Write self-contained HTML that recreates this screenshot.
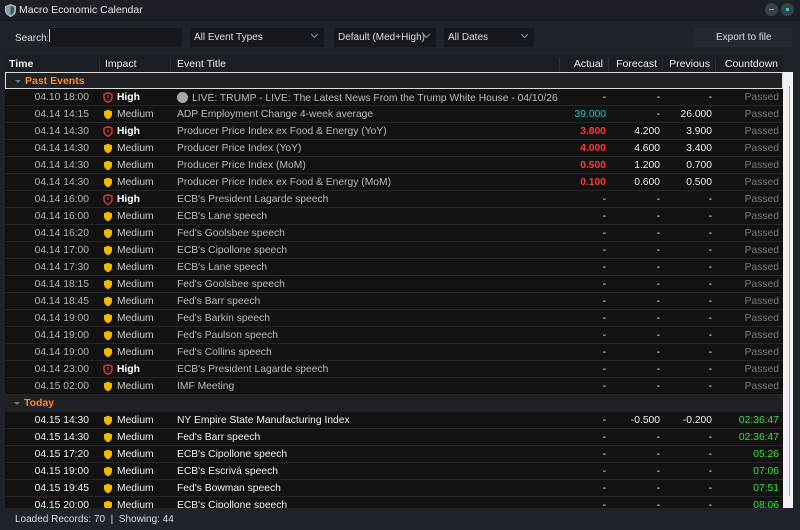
<!DOCTYPE html>
<html><head><meta charset="utf-8"><style>
*{margin:0;padding:0;box-sizing:border-box}
body{width:800px;height:530px;background:#1f242b;font-family:"Liberation Sans",sans-serif;font-size:10.3px;color:#ddd;position:relative;overflow:hidden}
.title{position:absolute;left:0;top:0;width:800px;height:21px;background:#1c2026;border-bottom:1px solid #15181c}
.title span{position:absolute;left:19px;top:4px;font-size:10.5px;color:#e6e6e6}
.wb{position:absolute;top:3px;width:13px;height:13px;border-radius:50%;background:#38424c}
.wb i{position:absolute;left:4px;top:6px;width:5px;height:1px;background:#3cc7c0}
.tb{position:absolute;top:28px;height:19px;background:#15191e;color:#ddd;font-size:10px;padding:4px 0 0 4px}
.chev{position:absolute;right:7px;top:4px;width:5px;height:5px;border-right:1.3px solid #3cc7c0;border-bottom:1.3px solid #3cc7c0;transform:rotate(45deg)}
.table{position:absolute;left:5px;top:55px;width:778px;height:453px;background:#131313;overflow:hidden}
.hdr{position:absolute;left:0;top:0;width:778px;height:17px;background:#1b1f24;font-size:10.5px;color:#eee}
.hdr div{position:absolute;top:3px;height:14px;border-right:1px solid #2c3036}
.row{position:absolute;left:0;width:778px;height:17px;border-bottom:1px solid #262626;background:#121212}
.row div{position:absolute;top:3px;white-space:nowrap}
.t{right:694px;color:#b4b4b4}
.row.td .t{color:#f0f0f0}
.ic{left:98px;top:3px!important}
.im{left:112px;color:#c8c8c8}
.row.td .im{color:#eee}
.im.h{font-weight:bold;color:#fff}
.ev{left:172px;color:#bbb}
.row.td .ev{color:#f2f2f2}
.a{right:177px;color:#eee}
.f{right:123px;color:#eee}
.p{right:71px;color:#eee}
.c{right:4px;color:#7a7a7a}
.g{color:#3ee43e!important}
.red{color:#ff3b30!important;font-weight:bold}
.grp{position:absolute;left:0;width:778px;height:17px;background:#1e2126;color:#ff8c1a;font-weight:bold;font-size:10.5px}
.grp span{position:absolute;left:19px;top:2px}
.grp b{position:absolute;left:9px;top:7px;border-left:3px solid transparent;border-right:3px solid transparent;border-top:3px solid #777}
.sb{position:absolute;left:783px;top:72px;width:10px;height:436px;background:#f2f2f2}
.sb i{position:absolute;left:6px;top:14px;width:1px;height:410px;background:#aaa}
.status{position:absolute;left:15px;top:514px;color:#ddd;font-size:10px}
</style></head><body>
<div class="title">
<svg style="position:absolute;left:5px;top:4px" width="11" height="13" viewBox="0 0 11 13"><path d="M5.5 0.5L10.5 2.5V6.5C10.5 9.5 8 11.5 5.5 12.5C3 11.5 0.5 9.5 0.5 6.5V2.5Z" fill="#8a9aa6" stroke="#cfd8de" stroke-width="0.8"/><path d="M5.5 2L9 3.4V6.5C9 8.5 7.3 10 5.5 10.9Z" fill="#2e5f5a"/></svg>
<span>Macro Economic Calendar</span>
<div class="wb" style="left:765px"><i></i></div><div class="wb" style="left:781px"><i style="left:5px;top:5px;width:3px;height:3px;background:#3cc7c0"></i></div>
</div>
<div style="position:absolute;left:15px;top:33px;font-size:10px;color:#ddd">Search:</div>
<div class="tb" style="left:48px;width:134px"><span style="display:block;width:1px;height:13px;background:#ddd;margin-top:-3px;margin-left:-3px"></span></div>
<div class="tb" style="left:190px;width:134px">All Event Types<i class="chev"></i></div>
<div class="tb" style="left:334px;width:102px">Default (Med+High)<i class="chev"></i></div>
<div class="tb" style="left:444px;width:90px">All Dates<i class="chev"></i></div>
<div class="tb" style="left:694px;width:98px;background:#252a31;padding-left:22px">Export to file</div>

<div class="table">
<div class="hdr">
<div style="left:4px;width:91px;font-weight:bold;border-right:1px solid #2c3036">Time</div>
<div style="left:95px;width:71px;padding-left:5px">Impact</div>
<div style="left:166px;width:389px;padding-left:6px">Event Title</div>
<div style="left:555px;width:49px;text-align:right;padding-right:5px">Actual</div>
<div style="left:604px;width:54px;text-align:right;padding-right:5px">Forecast</div>
<div style="left:658px;width:53px;text-align:right;padding-right:5px">Previous</div>
<div style="left:711px;width:67px;text-align:right;padding-right:5px;border:none">Countdown</div>
</div>
<div class="grp" style="top:17px;border:1px solid #dcdcdc"><b></b><span>Past Events</span></div>
<div id="rows"></div>
</div>
<div class="sb"><i></i></div>
<div class="status">Loaded Records: 70 &nbsp;| &nbsp;Showing: 44</div>
<script>
var H='<svg width="10" height="11" viewBox="0 0 10 11"><path d="M5 0.8L9 2.2V5.2C9 7.8 7 9.4 5 10.3C3 9.4 1 7.8 1 5.2V2.2Z" fill="none" stroke="#e53935" stroke-width="1.4"/><path d="M5 3V6M5 7.2V7.8" stroke="#e53935" stroke-width="1.2"/></svg>';
var M='<svg width="10" height="11" viewBox="0 0 10 11"><path d="M5 0.8L9 2.2V5.2C9 7.8 7 9.4 5 10.3C3 9.4 1 7.8 1 5.2V2.2Z" fill="#f5b800"/></svg>';
var past=[
["04.10 18:00","H",'<span style="display:inline-block;width:11px;height:11px;border-radius:50%;background:#a8a8a8;vertical-align:-2px;margin-right:4px"></span>LIVE: TRUMP - LIVE: The Latest News From the Trump White House - 04/10/26',"-","-","-"],
["04.14 14:15","M","ADP Employment Change 4-week average",'<span style="color:#22c8c8">39.000</span>',"-","26.000"],
["04.14 14:30","H","Producer Price Index ex Food &amp; Energy (YoY)","R3.800","4.200","3.900"],
["04.14 14:30","M","Producer Price Index (YoY)","R4.000","4.600","3.400"],
["04.14 14:30","M","Producer Price Index (MoM)","R0.500","1.200","0.700"],
["04.14 14:30","M","Producer Price Index ex Food &amp; Energy (MoM)","R0.100","0.600","0.500"],
["04.14 16:00","H","ECB's President Lagarde speech","-","-","-"],
["04.14 16:00","M","ECB's Lane speech","-","-","-"],
["04.14 16:20","M","Fed's Goolsbee speech","-","-","-"],
["04.14 17:00","M","ECB's Cipollone speech","-","-","-"],
["04.14 17:30","M","ECB's Lane speech","-","-","-"],
["04.14 18:15","M","Fed's Goolsbee speech","-","-","-"],
["04.14 18:45","M","Fed's Barr speech","-","-","-"],
["04.14 19:00","M","Fed's Barkin speech","-","-","-"],
["04.14 19:00","M","Fed's Paulson speech","-","-","-"],
["04.14 19:00","M","Fed's Collins speech","-","-","-"],
["04.14 23:00","H","ECB's President Lagarde speech","-","-","-"],
["04.15 02:00","M","IMF Meeting","-","-","-"]];
var today=[
["04.15 14:30","M","NY Empire State Manufacturing Index","-","-0.500","-0.200","02:36:47"],
["04.15 14:30","M","Fed's Barr speech","-","-","-","02:36:47"],
["04.15 17:20","M","ECB's Cipollone speech","-","-","-","05:26"],
["04.15 19:00","M","ECB's Escrivá speech","-","-","-","07:06"],
["04.15 19:45","M","Fed's Bowman speech","-","-","-","07:51"],
["04.15 20:00","M","ECB's Cipollone speech","-","-","-","08:06"]];
function row(r,top,td){
 var a=r[3],ac='a';
 if(a[0]=='R'){a=a.slice(1);ac='a red';}
 return '<div class="row'+(td?' td':'')+'" style="top:'+top+'px"><div class="t">'+r[0]+'</div><div class="ic">'+(r[1]=='H'?H:M)+'</div><div class="im'+(r[1]=='H'?' h':'')+'">'+(r[1]=='H'?'High':'Medium')+'</div><div class="ev">'+r[2]+'</div><div class="'+ac+'">'+a+'</div><div class="f">'+r[4]+'</div><div class="p">'+r[5]+'</div><div class="c'+(td?' g':'')+'">'+(td?r[6]:'Passed')+'</div></div>';
}
var h='',y=34;
past.forEach(function(r){h+=row(r,y,false);y+=17;});
h+='<div class="grp" style="top:'+y+'px"><b></b><span>Today</span></div>';y+=17;
today.forEach(function(r){h+=row(r,y,true);y+=17;});
document.getElementById('rows').outerHTML=h;
</script>
</body></html>
